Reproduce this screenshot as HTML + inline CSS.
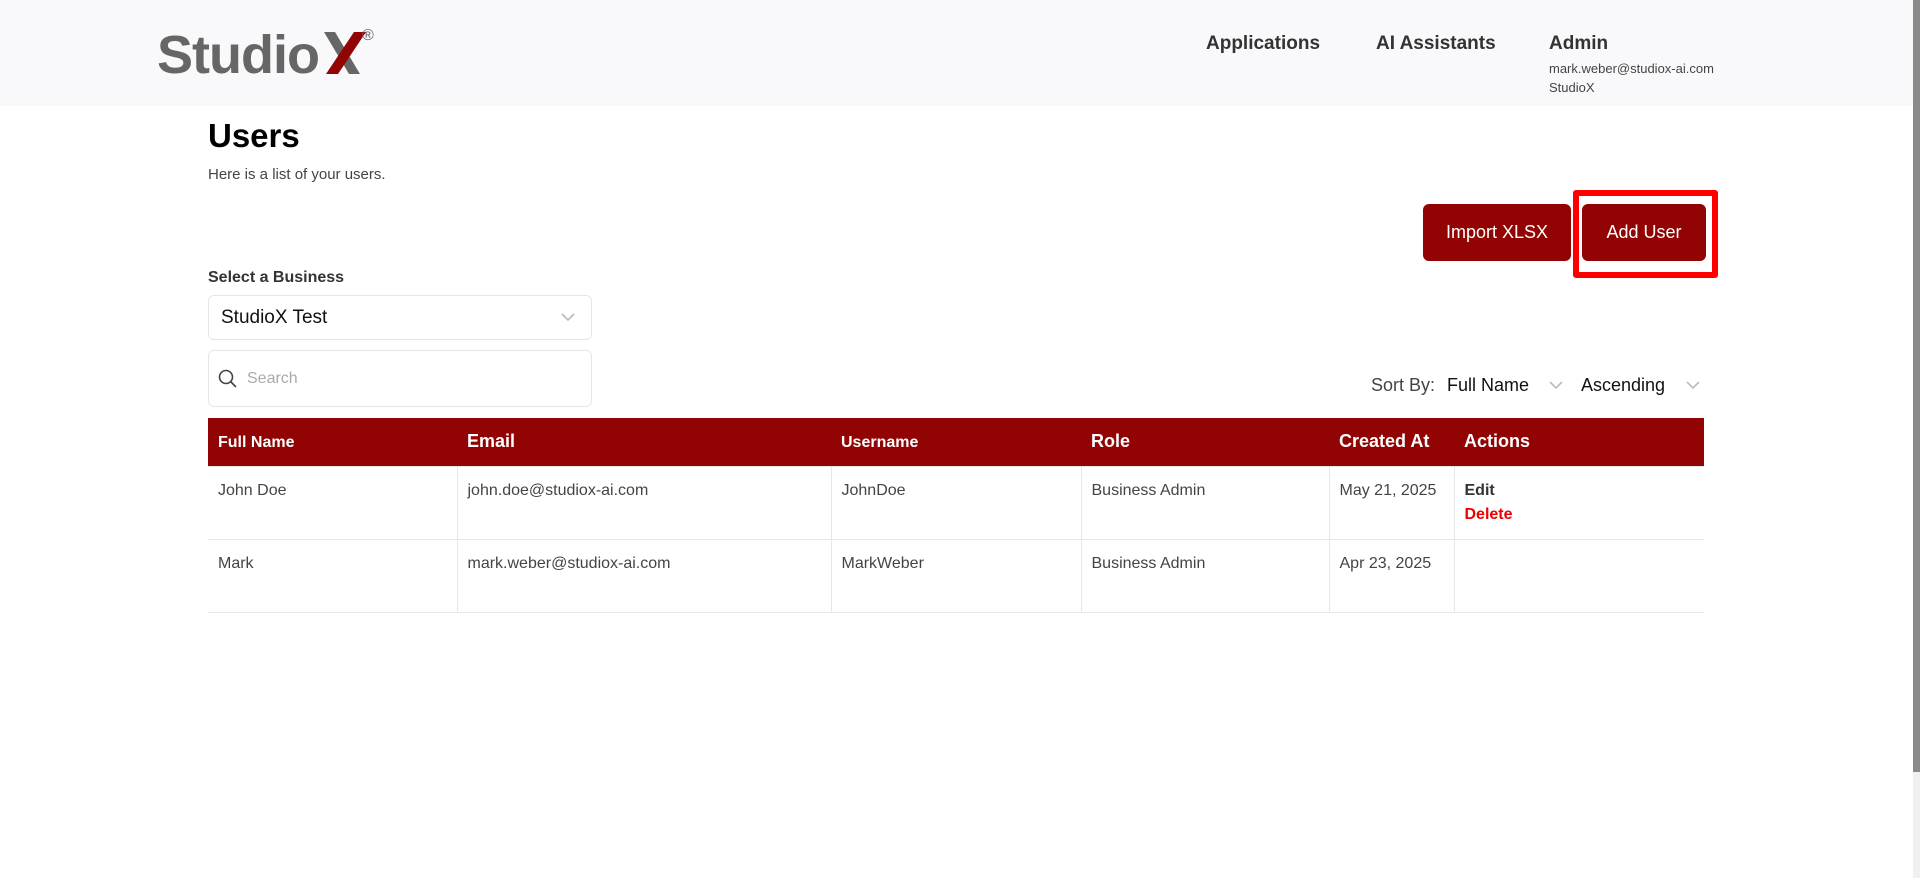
<!DOCTYPE html>
<html><head><meta charset="utf-8"><style>
*{margin:0;padding:0;box-sizing:border-box}
body{width:1920px;height:878px;overflow:hidden;background:#fff;font-family:"Liberation Sans",sans-serif;position:relative;color:#333}
.a{position:absolute;white-space:nowrap}
.hdr{position:absolute;left:0;top:0;width:1913px;height:106px;background:#f9f9fb}
.nav{font-weight:bold;font-size:19px;color:#333}
.btn{position:absolute;background:#920404;color:#fff;border-radius:6px;font-size:18px;display:flex;align-items:center;justify-content:center}
.box{position:absolute;border:1px solid #e3e6ec;border-radius:6px;background:#fff}
table{position:absolute;left:208px;top:418px;width:1496px;border-collapse:collapse;font-size:16px}
th{background:#920404;color:#fff;text-align:left;height:48px;padding:0 10px;font-size:16px}
td{vertical-align:top;padding:15px 10px 0;height:73px;border:1px solid #e5e7eb;color:#444}
tr td:first-child{border-left:none}
</style></head><body>
<div class="hdr"></div>
<div class="a" style="left:157px;top:24px;font-size:54px;font-weight:bold;color:#666;letter-spacing:-1px">Studio</div>
<svg class="a" style="left:324px;top:32px" width="44" height="42" viewBox="0 0 44 42"><polygon points="0,0 11,0 36,42 25,42" fill="#666"/><polygon points="30,0 42,0 14,42 2,42" fill="#920404"/></svg>
<div class="a" style="left:362px;top:27px;font-size:16px;color:#666">®</div>
<div class="a nav" style="left:1206px;top:33px">Applications</div>
<div class="a nav" style="left:1376px;top:33px">AI Assistants</div>
<div class="a nav" style="left:1549px;top:33px">Admin</div>
<div class="a" style="left:1549px;top:61px;font-size:13px;color:#444">mark.weber@studiox-ai.com</div>
<div class="a" style="left:1549px;top:80px;font-size:13px;color:#444">StudioX</div>
<div class="a" style="left:208px;top:117px;font-size:33px;font-weight:bold;color:#000">Users</div>
<div class="a" style="left:208px;top:166px;font-size:15px;color:#444">Here is a list of your users.</div>
<div class="btn" style="left:1423px;top:204px;width:148px;height:57px">Import XLSX</div>
<div class="a" style="left:1573px;top:190px;width:145px;height:88px;border:6px solid #ff0000;border-radius:3px"></div>
<div class="btn" style="left:1582px;top:204px;width:124px;height:57px">Add User</div>
<div class="a" style="left:208px;top:269px;font-size:16px;font-weight:bold;color:#333">Select a Business</div>
<div class="box" style="left:208px;top:295px;width:384px;height:45px"></div>
<div class="a" style="left:221px;top:307px;font-size:19px;color:#111">StudioX Test</div>
<svg class="a" style="left:561px;top:313px" width="14" height="9" viewBox="0 0 14 9"><path d="M1 1l6 6 6-6" fill="none" stroke="#bbb" stroke-width="1.6"/></svg>
<div class="box" style="left:208px;top:350px;width:384px;height:57px"></div>
<svg class="a" style="left:218px;top:369px" width="20" height="20" viewBox="0 0 20 20"><circle cx="8" cy="8" r="6.5" fill="none" stroke="#444" stroke-width="1.6"/><path d="M13 13l5 5" stroke="#444" stroke-width="1.6"/></svg>
<div class="a" style="left:247px;top:370px;font-size:16px;color:#aaa">Search</div>
<div class="a" style="left:1371px;top:375px;font-size:18px;color:#444">Sort By:</div>
<div class="a" style="left:1447px;top:375px;font-size:18px;color:#111">Full Name</div>
<svg class="a" style="left:1549px;top:381px" width="14" height="9" viewBox="0 0 14 9"><path d="M1 1l6 6 6-6" fill="none" stroke="#bbb" stroke-width="1.6"/></svg>
<div class="a" style="left:1581px;top:375px;font-size:18px;color:#111">Ascending</div>
<svg class="a" style="left:1686px;top:381px" width="14" height="9" viewBox="0 0 14 9"><path d="M1 1l6 6 6-6" fill="none" stroke="#bbb" stroke-width="1.6"/></svg>
<table>
<tr><th style="width:249px;padding-top:3px">Full Name</th><th style="width:374px;font-size:18px">Email</th><th style="width:250px;padding-top:3px">Username</th><th style="width:248px;font-size:18px">Role</th><th style="width:125px;font-size:18px">Created At</th><th style="font-size:18px">Actions</th></tr>
<tr><td>John Doe</td><td>john.doe@studiox-ai.com</td><td>JohnDoe</td><td>Business Admin</td><td>May 21, 2025</td><td style="border-right:none"><b style="color:#333">Edit</b><br><b style="color:#e00;line-height:30px">Delete</b></td></tr>
<tr><td>Mark</td><td>mark.weber@studiox-ai.com</td><td>MarkWeber</td><td>Business Admin</td><td>Apr 23, 2025</td><td style="border-right:none"></td></tr>
</table>
<div class="a" style="left:1913px;top:0;width:7px;height:878px;background:#f0f0f0"></div>
<div class="a" style="left:1913px;top:0;width:7px;height:772px;background:#8a8a8a"></div>
</body></html>
